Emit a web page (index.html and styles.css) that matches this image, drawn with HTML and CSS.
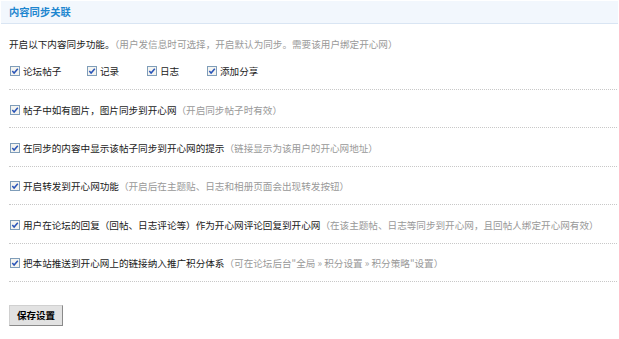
FILE: index.html
```html
<!DOCTYPE html>
<html>
<head>
  <meta charset="utf-8">
  <title>内容同步关联</title>
  <link rel="stylesheet" href="styles.css">
</head>
<body>
  <div class="panel">
    <h3 class="title">内容同步关联</h3>

    <div class="block">
      <p class="intro">开启以下内容同步功能。<span class="tip">（用户发信息时可选择，开启默认为同步。需要该用户绑定开心网）</span></p>
      <div class="opts">
        <label class="opt"><svg class="cb" width="10" height="10" viewBox="0 0 10 10"><rect x="0.5" y="0.5" width="9" height="9" fill="#f4f4f0" stroke="#7f9db9"/><path d="M2.3 5 L4.1 7 L7.8 2.7" fill="none" stroke="#2a54b8" stroke-width="1.5"/></svg>论坛帖子</label>
        <label class="opt"><svg class="cb" width="10" height="10" viewBox="0 0 10 10"><rect x="0.5" y="0.5" width="9" height="9" fill="#f4f4f0" stroke="#7f9db9"/><path d="M2.3 5 L4.1 7 L7.8 2.7" fill="none" stroke="#2a54b8" stroke-width="1.5"/></svg>记录</label>
        <label class="opt"><svg class="cb" width="10" height="10" viewBox="0 0 10 10"><rect x="0.5" y="0.5" width="9" height="9" fill="#f4f4f0" stroke="#7f9db9"/><path d="M2.3 5 L4.1 7 L7.8 2.7" fill="none" stroke="#2a54b8" stroke-width="1.5"/></svg>日志</label>
        <label class="opt"><svg class="cb" width="10" height="10" viewBox="0 0 10 10"><rect x="0.5" y="0.5" width="9" height="9" fill="#f4f4f0" stroke="#7f9db9"/><path d="M2.3 5 L4.1 7 L7.8 2.7" fill="none" stroke="#2a54b8" stroke-width="1.5"/></svg>添加分享</label>
      </div>
    </div>

    <div class="row"><label><svg class="cb" width="10" height="10" viewBox="0 0 10 10"><rect x="0.5" y="0.5" width="9" height="9" fill="#f4f4f0" stroke="#7f9db9"/><path d="M2.3 5 L4.1 7 L7.8 2.7" fill="none" stroke="#2a54b8" stroke-width="1.5"/></svg>帖子中如有图片，图片同步到开心网</label><span class="tip">（开启同步帖子时有效）</span></div>

    <div class="row"><label><svg class="cb" width="10" height="10" viewBox="0 0 10 10"><rect x="0.5" y="0.5" width="9" height="9" fill="#f4f4f0" stroke="#7f9db9"/><path d="M2.3 5 L4.1 7 L7.8 2.7" fill="none" stroke="#2a54b8" stroke-width="1.5"/></svg>在同步的内容中显示该帖子同步到开心网的提示</label><span class="tip">（链接显示为该用户的开心网地址）</span></div>

    <div class="row"><label><svg class="cb" width="10" height="10" viewBox="0 0 10 10"><rect x="0.5" y="0.5" width="9" height="9" fill="#f4f4f0" stroke="#7f9db9"/><path d="M2.3 5 L4.1 7 L7.8 2.7" fill="none" stroke="#2a54b8" stroke-width="1.5"/></svg>开启转发到开心网功能</label><span class="tip">（开启后在主题贴、日志和相册页面会出现转发按钮）</span></div>

    <div class="row"><label><svg class="cb" width="10" height="10" viewBox="0 0 10 10"><rect x="0.5" y="0.5" width="9" height="9" fill="#f4f4f0" stroke="#7f9db9"/><path d="M2.3 5 L4.1 7 L7.8 2.7" fill="none" stroke="#2a54b8" stroke-width="1.5"/></svg>用户在论坛的回复（回帖、日志评论等）作为开心网评论回复到开心网</label><span class="tip">（在该主题帖、日志等同步到开心网，且回帖人绑定开心网有效）</span></div>

    <div class="row"><label><svg class="cb" width="10" height="10" viewBox="0 0 10 10"><rect x="0.5" y="0.5" width="9" height="9" fill="#f4f4f0" stroke="#7f9db9"/><path d="M2.3 5 L4.1 7 L7.8 2.7" fill="none" stroke="#2a54b8" stroke-width="1.5"/></svg>把本站推送到开心网上的链接纳入推广积分体系</label><span class="tip">（可在论坛后台"全局 &raquo; 积分设置 &raquo; 积分策略"设置）</span></div>

    <div class="actions">
      <button type="button" class="btn">保存设置</button>
    </div>
  </div>
</body>
</html>
```

FILE: styles.css
```css
body {
  margin: 0;
  background-color: #fff;
  font-family: "Noto Sans CJK SC", "Liberation Sans", sans-serif;
  font-size: 9.6px;
  color: #1a1a1a;
}

.panel {
  padding: 1px 1px 0 1px;
}

.title {
  margin: 0;
  height: 22px;
  line-height: 22px;
  padding-left: 8px;
  background-color: #f2f7fd;
  border-bottom: 1px solid #d9e5f3;
  font-size: 10.3px;
  font-weight: bold;
  color: #1e86cf;
}

.block,
.row,
.actions {
  margin: 0 1px 0 8px;
}

.block {
  padding-top: 11px;
  padding-bottom: 9px;
  border-bottom: 1px dotted #c8c8c8;
}

.intro {
  margin: 0;
  line-height: 18px;
}

.tip {
  color: #999;
}

.opts {
  display: flex;
  margin-top: 9px;
  line-height: 18px;
}

.opt {
  display: flex;
  align-items: center;
}

.opt:nth-child(1) { width: 77px; }
.opt:nth-child(2) { width: 60px; }
.opt:nth-child(3) { width: 60px; }

.cb {
  display: block;
  flex: none;
  margin: 0 3px 0 1px;
}

.row {
  display: flex;
  align-items: center;
  height: 38.4px;
  line-height: 18px;
  padding-top: 2px;
  box-sizing: border-box;
  border-bottom: 1px dotted #c8c8c8;
  white-space: nowrap;
}

.row label {
  display: flex;
  align-items: center;
}

.actions {
  padding-top: 23px;
}

.btn {
  height: 21px;
  padding: 0 7px;
  font-family: "Noto Sans CJK SC", sans-serif;
  font-size: 9.5px;
  font-weight: bold;
  color: #000;
  background-color: #e2e2e2;
  border: 1px solid;
  border-color: #d0d0d0 #8a8a8a #8a8a8a #d0d0d0;
  border-radius: 0;
}
```
